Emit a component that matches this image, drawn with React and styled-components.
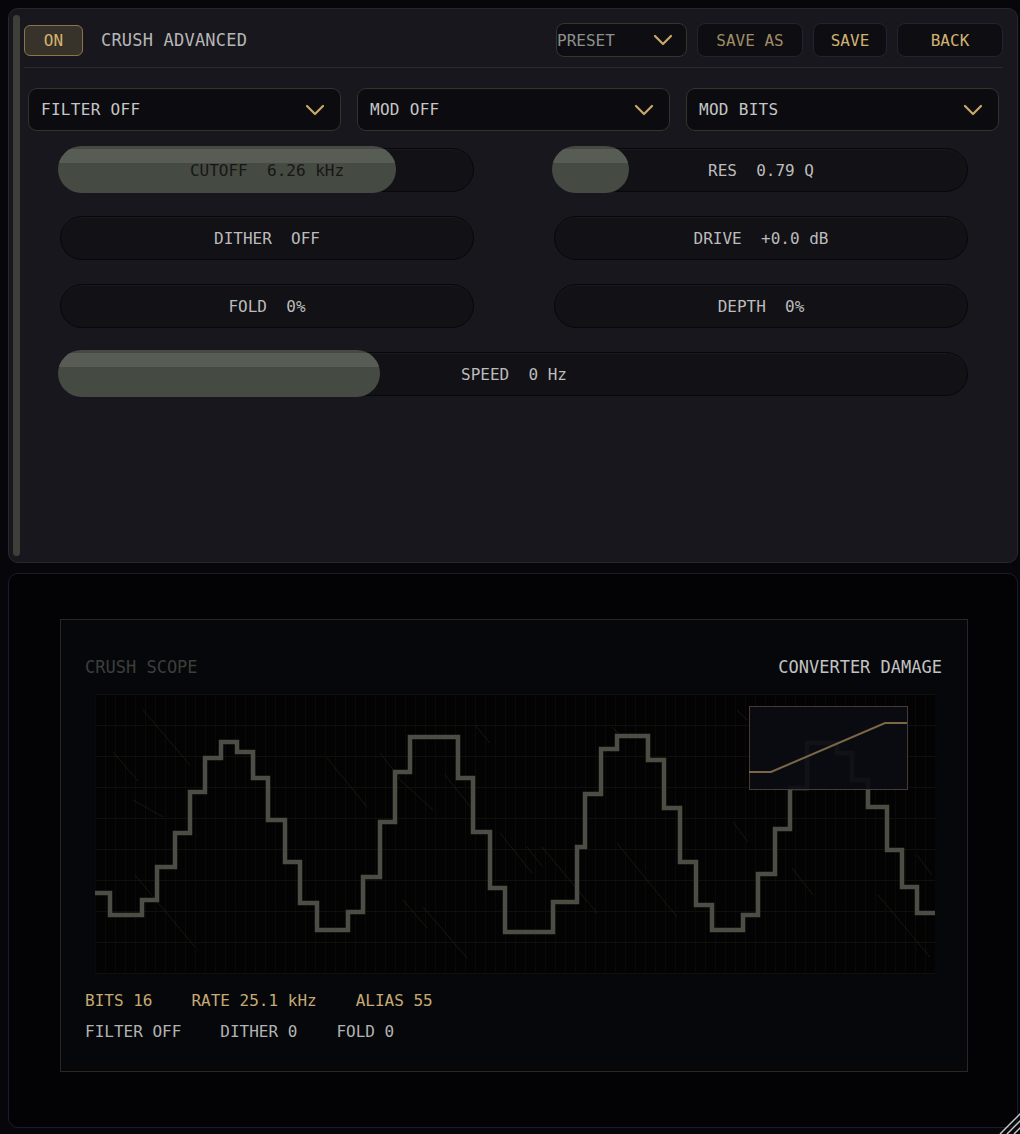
import React from 'react';
import styled, { createGlobalStyle } from 'styled-components';

const GlobalStyle = createGlobalStyle`
  html, body {
    margin: 0;
    padding: 0;
    background: #07070b;
  }
  body {
    font-family: "DejaVu Sans Mono", "Liberation Mono", monospace;
    font-size: 16px;
  }
  * {
    box-sizing: border-box;
  }
`;

const Page = styled.div`
  position: relative;
  width: 1020px;
  height: 1134px;
  padding: 8px 2px 0 8px;
  display: flex;
  flex-direction: column;
  gap: 10px;
  overflow: hidden;
`;

const Editor = styled.section`
  position: relative;
  height: 555px;
  background: #18171d;
  border: 1px solid #28272f;
  border-radius: 10px;
  padding: 14px 14px 0 15px;
`;

const ScrollThumb = styled.div`
  position: absolute;
  left: 4px;
  top: 6px;
  bottom: 6px;
  width: 7px;
  border-radius: 4px;
  background: #3d3f38;
`;

const Header = styled.header`
  height: 34px;
  display: flex;
  align-items: center;
  justify-content: space-between;
`;

const HeaderLeft = styled.div`
  display: flex;
  align-items: center;
  gap: 18px;
`;

const PowerButton = styled.button`
  width: 59px;
  height: 31px;
  border: 1px solid #8b7447;
  border-radius: 6px;
  background: #37332b;
  color: #d6b36e;
  font: inherit;
  font-size: 16px;
  padding: 0;
`;

const Title = styled.h1`
  margin: 0;
  font-size: 17px;
  font-weight: normal;
  letter-spacing: 0.2px;
  color: #b6b6b6;
`;

const HeaderRight = styled.div`
  display: flex;
  align-items: center;
  gap: 10px;
`;

const PresetSelect = styled.div`
  width: 131px;
  height: 34px;
  display: flex;
  align-items: center;
  justify-content: space-between;
  padding: 0 13px 0 0;
  border: 1px solid #37342a;
  border-radius: 8px;
  background: #0e0e12;
  color: #8f8f8f;
  font-size: 16px;
`;

const HeaderButton = styled.button`
  width: ${(p) => p.$w}px;
  height: 34px;
  border: 1px solid #232334;
  border-radius: 8px;
  background: #0d0d12;
  color: ${(p) => p.$color};
  font: inherit;
  font-size: 16px;
  padding: 0;
`;

const Divider = styled.hr`
  margin: 10px 0 0;
  border: 0;
  height: 1px;
  background: #2a2930;
`;

const DropRow = styled.div`
  margin-top: 20px;
  padding: 0 4px;
  display: grid;
  grid-template-columns: repeat(3, 1fr);
  gap: 16px;
`;

const Dropdown = styled.div`
  height: 43px;
  display: flex;
  align-items: center;
  justify-content: space-between;
  padding: 0 15px 0 12px;
  border: 1px solid #35322a;
  border-radius: 9px;
  background: #0c0c10;
  color: #c6c6c6;
  font-size: 16px;
  letter-spacing: 0.3px;
`;

const SliderGrid = styled.div`
  margin-top: 17px;
  padding: 0 35px 0 36px;
  display: grid;
  grid-template-columns: 1fr 1fr;
  gap: 24px 80px;
`;

const Track = styled.div`
  position: relative;
  height: 44px;
  grid-column: ${(p) => (p.$wide ? '1 / -1' : 'auto')};
  display: flex;
  align-items: center;
  justify-content: center;
  border-radius: 22px;
  background: #111116;
  border: 1px solid #08080a;
  box-shadow: inset 0 1px 0 rgba(255, 255, 255, 0.035);
`;

const Fill = styled.div`
  position: absolute;
  left: -3px;
  top: -3px;
  bottom: -2px;
  border-radius: 24px;
  background: #454a42;
  overflow: hidden;

  &::before {
    content: '';
    position: absolute;
    left: 0;
    right: 0;
    top: 3px;
    height: 14px;
    background: #575c55;
  }
`;

const SliderLabel = styled.span`
  position: relative;
  white-space: pre;
  font-size: 16px;
  color: ${(p) => (p.$dim ? '#161715' : '#bcbcbc')};
`;

const ScopePanel = styled.section`
  position: relative;
  height: 555px;
  background: #030305;
  border: 1px solid #1c1b2e;
  border-radius: 10px;
  padding: 45px 49px 0 51px;
`;

const ScopeFrame = styled.div`
  height: 453px;
  border: 1px solid #2e2420;
  background: #06070a;
  padding: 37px 25px 0 24px;
`;

const ScopeHead = styled.div`
  height: 20px;
  display: flex;
  align-items: center;
  justify-content: space-between;
  font-size: 17px;
`;

const ScopeName = styled.span`
  color: ${(p) => p.$color};
`;

const Canvas = styled.svg`
  display: block;
  margin: 17px 0 0 10px;
  width: 840px;
  height: 280px;
`;

const StatRow = styled.div`
  display: flex;
  gap: 39px;
  height: 20px;
  align-items: center;
  margin-top: ${(p) => p.$mt}px;
  color: ${(p) => p.$color};
  font-size: 16px;
`;

const Grip = styled.svg`
  position: absolute;
  right: 0;
  bottom: 0;
`;

const Chevron = () => (
  <svg width="20" height="12" viewBox="0 0 20 12">
    <polyline points="2,2 10,10 18,2" fill="none" stroke="#c9a86a" strokeWidth="2.2" strokeLinecap="round" strokeLinejoin="round" />
  </svg>
);

const wave = [
  [95, 893], [110, 893], [110, 915], [142, 915], [142, 900], [157, 900], [157, 867], [175, 867],
  [175, 833], [190, 833], [190, 792], [205, 792], [205, 758], [221, 758], [221, 742], [237, 742],
  [237, 752], [253, 752], [253, 778], [268, 778], [268, 820], [285, 820], [285, 862], [300, 862],
  [300, 903], [317, 903], [317, 930], [348, 930], [348, 912], [363, 912], [363, 877], [380, 877],
  [380, 822], [395, 822], [395, 772], [410, 772], [410, 737], [458, 737], [458, 778], [473, 778],
  [473, 832], [490, 832], [490, 888], [505, 888], [505, 932], [553, 932], [553, 902], [577, 902],
  [577, 847], [585, 847], [585, 794], [601, 794], [601, 749], [617, 749], [617, 736], [648, 736],
  [648, 760], [664, 760], [664, 808], [680, 808], [680, 862], [696, 862], [696, 905], [712, 905],
  [712, 930], [743, 930], [743, 915], [758, 915], [758, 874], [775, 874], [775, 829], [790, 829],
  [790, 788], [807, 788], [807, 743], [837, 743], [837, 753], [852, 753], [852, 780], [868, 780],
  [868, 807], [887, 807], [887, 850], [902, 850], [902, 887], [917, 887], [917, 913], [935, 913],
];

const rain = [
  [143, 710, 190, 765], [113, 752, 138, 781], [380, 753, 400, 778], [475, 725, 490, 743],
  [327, 758, 367, 807], [445, 775, 473, 810], [398, 778, 433, 810], [135, 875, 195, 947],
  [403, 900, 427, 928], [423, 907, 467, 958], [133, 800, 163, 817], [500, 833, 532, 873],
  [527, 847, 543, 867], [542, 847, 597, 913], [617, 843, 677, 917], [733, 822, 748, 842],
  [792, 868, 813, 895], [878, 895, 930, 957], [917, 855, 932, 875], [737, 710, 747, 720],
  [612, 727, 622, 737], [850, 752, 870, 772],
];

const sliders = [
  { label: 'CUTOFF  6.26 kHz', fill: 338, dim: true },
  { label: 'RES  0.79 Q', fill: 77 },
  { label: 'DITHER  OFF' },
  { label: 'DRIVE  +0.0 dB' },
  { label: 'FOLD  0%' },
  { label: 'DEPTH  0%' },
  { label: 'SPEED  0 Hz', fill: 322, wide: true },
];

const ScopeChart = () => {
  const ox = 95;
  const oy = 694;
  const pts = wave.map(([x, y]) => `${x - ox},${y - oy}`).join(' ');
  const vlines = Array.from({ length: 85 }, (_, i) => i * 10);
  const hlines = Array.from({ length: 10 }, (_, i) => i * 31);
  return (
    <Canvas viewBox="0 0 840 280">
      <rect width="840" height="280" fill="#030303" />
      {vlines.map((x) => (
        <line key={`v${x}`} x1={x + 0.5} y1="0" x2={x + 0.5} y2="280" stroke="#0b0a09" strokeWidth="1" />
      ))}
      {hlines.map((y) => (
        <line key={`h${y}`} x1="0" y1={y + 0.5} x2="840" y2={y + 0.5} stroke="#110e0b" strokeWidth="1" />
      ))}
      {rain.map(([x1, y1, x2, y2], i) => (
        <line key={`r${i}`} x1={x1 - ox} y1={y1 - oy} x2={x2 - ox} y2={y2 - oy} stroke="#3a3222" strokeWidth="1" opacity="0.4" />
      ))}
      <polyline points={pts} fill="none" stroke="#4c4d44" strokeWidth="4.5" strokeLinejoin="miter" />
      <rect x="654.5" y="12.5" width="158" height="83" fill="#0b0c13" fillOpacity="0.9" stroke="#4a3934" strokeWidth="1" />
      <polyline points="654,78 676,78 790,29 812,29" fill="none" stroke="#7a6746" strokeWidth="2" />
    </Canvas>
  );
};

export default function App() {
  return (
    <>
      <GlobalStyle />
      <Page>
        <Editor>
          <ScrollThumb />
          <Header>
            <HeaderLeft>
              <PowerButton>ON</PowerButton>
              <Title>CRUSH ADVANCED</Title>
            </HeaderLeft>
            <HeaderRight>
              <PresetSelect>
                <span>PRESET</span>
                <Chevron />
              </PresetSelect>
              <HeaderButton $w={106} $color="#a08d66">SAVE AS</HeaderButton>
              <HeaderButton $w={74} $color="#d2b272">SAVE</HeaderButton>
              <HeaderButton $w={106} $color="#d2b272">BACK</HeaderButton>
            </HeaderRight>
          </Header>
          <Divider />
          <DropRow>
            {['FILTER OFF', 'MOD OFF', 'MOD BITS'].map((t) => (
              <Dropdown key={t}>
                <span>{t}</span>
                <Chevron />
              </Dropdown>
            ))}
          </DropRow>
          <SliderGrid>
            {sliders.map((s) => (
              <Track key={s.label} $wide={s.wide}>
                {s.fill && <Fill style={{ width: s.fill }} />}
                <SliderLabel $dim={s.dim}>{s.label}</SliderLabel>
              </Track>
            ))}
          </SliderGrid>
        </Editor>
        <ScopePanel>
          <ScopeFrame>
            <ScopeHead>
              <ScopeName $color="#3d3e3a">CRUSH SCOPE</ScopeName>
              <ScopeName $color="#c2c2c2">CONVERTER DAMAGE</ScopeName>
            </ScopeHead>
            <ScopeChart />
            <StatRow $mt={16} $color="#c6aa74">
              <span>BITS 16</span>
              <span>RATE 25.1 kHz</span>
              <span>ALIAS 55</span>
            </StatRow>
            <StatRow $mt={11} $color="#b3b3b3">
              <span>FILTER OFF</span>
              <span>DITHER 0</span>
              <span>FOLD 0</span>
            </StatRow>
          </ScopeFrame>
        </ScopePanel>
        <Grip width="22" height="24" viewBox="0 0 22 24">
          <line x1="2" y1="24" x2="24" y2="2" stroke="#c8c8c8" strokeWidth="1.5" />
          <line x1="9" y1="24" x2="24" y2="9" stroke="#c8c8c8" strokeWidth="1.5" />
          <line x1="16" y1="24" x2="24" y2="16" stroke="#c8c8c8" strokeWidth="1.5" />
        </Grip>
      </Page>
    </>
  );
}
